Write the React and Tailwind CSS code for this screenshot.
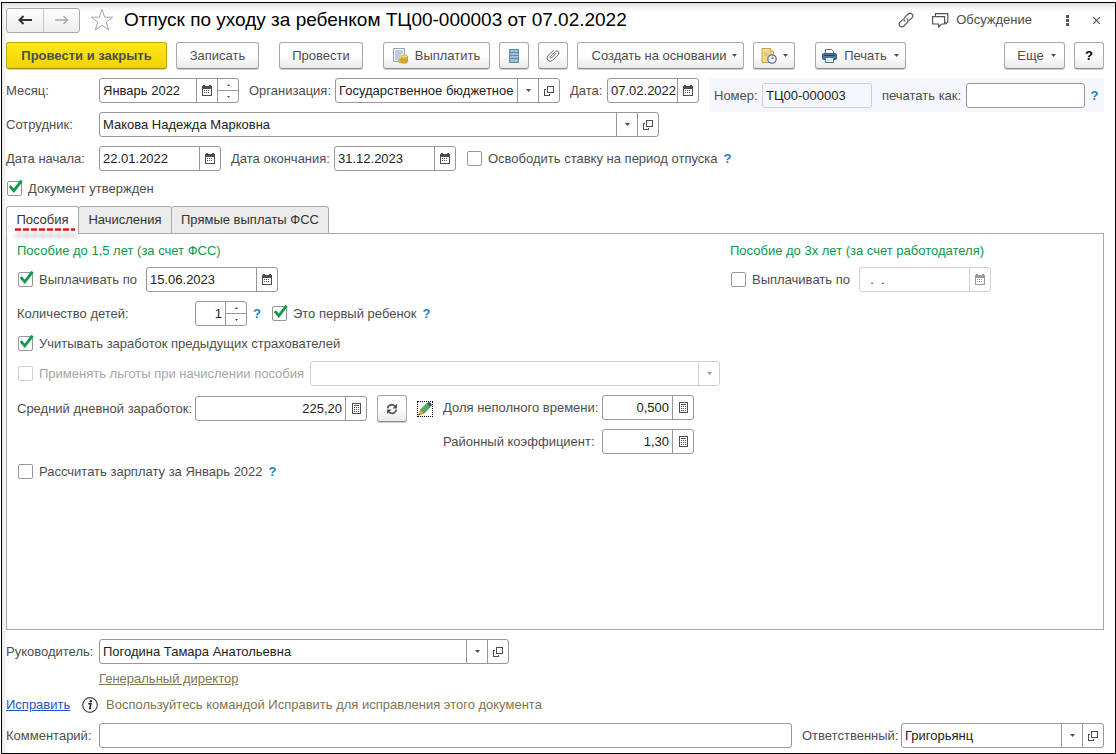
import React, { useState } from 'react';

const BORDER = 'border-[#979797]';
const BORDER_OFF = 'border-[#cfcfcf]';

const CalendarIcon = () => (
  <svg width="10" height="11" viewBox="0 0 10 11" fill="currentColor" shapeRendering="crispEdges">
    <path d="M0 1h1V0h2v1h4V0h2v1h1v10H0zM1 4v6h8V4z" fillRule="evenodd" />
    <path d="M2 5h1v1H2zM4 5h1v1H4zM6 5h1v1H6zM2 7h1v1H2zM4 7h1v1H4zM6 7h1v1H6z" />
  </svg>
);

const CalcIcon = () => (
  <svg width="9" height="11" viewBox="0 0 9 11" fill="currentColor" shapeRendering="crispEdges">
    <path d="M0 0h9v11H0zM1 1v9h7V1z" fillRule="evenodd" />
    <path d="M2 2h5v1H2zM2 4h1v1H2zM4 4h1v1H4zM6 4h1v1H6zM2 6h1v1H2zM4 6h1v1H4zM6 6h1v1H6zM2 8h1v1H2zM4 8h1v1H4zM6 8h1v1H6z" />
  </svg>
);

const OpenIcon = () => (
  <svg width="10" height="10" viewBox="0 0 10 10" fill="none" stroke="currentColor" shapeRendering="crispEdges">
    <path d="M3.5 0.5h6v6h-6z" />
    <path d="M2 3.5H0.5v6h5V8" />
  </svg>
);

const Arrow = () => (
  <svg width="5" height="3" viewBox="0 0 5 3" fill="currentColor">
    <path d="M0 0h5L2.5 3z" />
  </svg>
);

const StarIcon = () => (
  <svg width="24" height="24" viewBox="0 0 24 24" fill="none" stroke="#9da5ad">
    <path d="M12 1.5l2.7 7.7h8l-6.4 4.9 2.4 7.9-6.7-4.8L5.3 22l2.4-7.9-6.4-4.9h8z" />
  </svg>
);

const LinkIcon = () => (
  <svg width="16" height="16" viewBox="0 0 16 16" fill="none" stroke="#555" strokeWidth="1.2" strokeLinecap="round">
    <path d="M6.8 9.2a2.7 2.7 0 0 1 0-3.8l3.6-3.6a2.7 2.7 0 0 1 3.8 3.8l-2.6 2.6" />
    <path d="M9.2 6.8a2.7 2.7 0 0 1 0 3.8l-3.6 3.6a2.7 2.7 0 0 1-3.8-3.8l2.6-2.6" />
  </svg>
);

const ChatIcon = () => (
  <svg width="17" height="15" viewBox="0 0 17 15" fill="none" stroke="#555" strokeWidth="1.2">
    <path d="M0.6 3.6h12v7.4H9.8L6.6 14v-3h-6z" />
    <path d="M3.4 3.4V0.6h12.4v8.2l-1.4 1.8-1.6-1.4" />
  </svg>
);

const PayIcon = () => (
  <svg width="16" height="16" viewBox="0 0 16 16">
    <path d="M0.5 0.5h11v13h-11z" fill="#fff" stroke="#8ea3b5" />
    <path d="M2 3h8M2 5h8M2 7h6M2 9h5M2 11h5" stroke="#7c9bb5" />
    <ellipse cx="8.5" cy="13" rx="3" ry="1.8" fill="#f5c944" stroke="#b98a1c" strokeWidth=".7" />
    <path d="M8 8.5v5a3.3 1.8 0 0 0 6.6 0v-5z" fill="#eebb35" stroke="#b98a1c" strokeWidth=".7" />
    <path d="M8 10.3a3.3 1.6 0 0 0 6.6 0M8 12.1a3.3 1.6 0 0 0 6.6 0" fill="none" stroke="#b98a1c" strokeWidth=".7" />
    <ellipse cx="11.3" cy="8.5" rx="3.3" ry="1.6" fill="#fbe07c" stroke="#b98a1c" strokeWidth=".7" />
  </svg>
);

const ListIcon = () => (
  <svg width="10" height="14" viewBox="0 0 10 14" shapeRendering="crispEdges">
    <path d="M0 0h10v14H0z" fill="#5f8cab" />
    <path d="M1 1h8v2H1zM1 4h8v2H1zM1 7h8v2H1zM1 10h8v3H1z" fill="#9dc0d8" />
  </svg>
);

const ClipIcon = () => (
  <svg width="14" height="14" viewBox="0 0 14 14" fill="none" stroke="#666" strokeWidth="1" strokeLinecap="round">
    <path d="M10 4.4L5.6 8.8a.9.9 0 0 1-1.3-1.3l5-5a2.1 2.1 0 0 1 3 3L6.6 11.2a3.2 3.2 0 0 1-4.6-4.5L7.4 1.4" />
  </svg>
);

const DocClockIcon = () => (
  <svg width="16" height="16" viewBox="0 0 16 16">
    <path d="M1 0.5h8.5l3 3V14.5H1z" fill="#f3d98b" stroke="#c9a446" />
    <path d="M9.5 0.5v3h3" fill="#fff3cc" stroke="#c9a446" />
    <path d="M3 5h5M3 7h4" stroke="#d9ba62" />
    <circle cx="11" cy="11" r="4.2" fill="#fff" stroke="#3f75a8" strokeWidth="1.3" />
    <path d="M11 8.5V11l2-1" fill="none" stroke="#d8402c" />
  </svg>
);

const PrinterIcon = () => (
  <svg width="15" height="14" viewBox="0 0 15 14">
    <path d="M3.5 0.5h6l2 2V5h-8z" fill="#fff" stroke="#4c6f8c" />
    <rect x="0.5" y="4.5" width="14" height="6" rx="1.2" fill="#4a7ba6" stroke="#33587a" />
    <path d="M2 6.5h11" stroke="#24425e" />
    <path d="M3.5 8.5h8v5h-8z" fill="#fff" stroke="#4c6f8c" />
    <path d="M5 11h5" stroke="#a9bccb" />
  </svg>
);

const RefreshIcon = () => (
  <svg width="12" height="12" viewBox="0 0 12 12" fill="none" stroke="#505050" strokeWidth="1.7">
    <path d="M1.5 5.3A4.4 4.4 0 0 1 9 3" />
    <path d="M10.5 6.7A4.4 4.4 0 0 1 3 9" />
    <path d="M11 0.8v4.6H6.4zM1 11.2V6.6h4.6z" fill="#505050" stroke="none" />
  </svg>
);

const PencilIcon = () => (
  <svg width="14" height="14" viewBox="0 0 14 14">
    <path d="M2.4 8L9 1.4l3.4 3.4L5.8 11.4z" fill="#4fae55" stroke="#2f7d3a" strokeWidth=".7" />
    <path d="M9 1.4l1.2-1.2h1.6L13.6 2v1.6l-1.2 1.2z" fill="#2f4f6b" />
    <path d="M2.4 8L0.6 13.2l5.2-1.8z" fill="#f0b040" stroke="#b97f26" strokeWidth=".5" />
    <path d="M0.5 13.5l.7-2 1.3 1.3z" fill="#444" />
  </svg>
);

const InfoIcon = () => (
  <svg width="16" height="16" viewBox="0 0 16 16">
    <circle cx="8" cy="8" r="7.3" fill="#fff" stroke="#444" strokeWidth="1.2" />
    <circle cx="8.8" cy="4.3" r="1.2" fill="#222" />
    <path d="M6.2 6.8h2.6L7.8 11.6h1.4" fill="none" stroke="#222" strokeWidth="1.5" />
  </svg>
);

const plainBtn = 'border-[#a8a8a8] border-b-[#8c8c8c] bg-linear-to-b from-white from-50% to-[#e9e9e9]';
const mainBtn = 'border-[#c2a700] border-b-[#a89000] bg-linear-to-b from-[#ffe81a] to-[#f2d200] font-bold';

function Btn({ className = '', main, children, ...rest }) {
  return (
    <button
      type="button"
      className={`flex h-[27px] shrink-0 items-center justify-center rounded-[3px] border whitespace-nowrap shadow-[0_1px_0_#d0d0d0] ${main ? mainBtn : plainBtn} ${className}`}
      {...rest}
    >
      {children}
    </button>
  );
}

function Field({ className = '', off, children }) {
  return (
    <div className={`flex h-[25px] shrink-0 overflow-hidden rounded-[3px] border bg-white ${off ? `${BORDER_OFF} text-[#999]` : `${BORDER} text-[#4d4d4d]`} ${className}`}>
      {children}
    </div>
  );
}

function TextBox({ right, ...rest }) {
  return <input type="text" className={`w-0 min-w-0 flex-1 bg-transparent text-[#222] outline-none ${right ? 'pr-[3px] text-right' : 'pl-[3px]'}`} {...rest} />;
}

function CellButton({ off, children, ...rest }) {
  return (
    <button type="button" disabled={off} className={`flex w-[21px] shrink-0 items-center justify-center border-l ${off ? BORDER_OFF : BORDER}`} {...rest}>
      {children}
    </button>
  );
}

function Spinner() {
  return (
    <div className={`flex w-[21px] shrink-0 flex-col border-l ${BORDER}`}>
      <button type="button" aria-label="Больше" className={`flex flex-1 items-center justify-center border-b ${BORDER}`}>
        <svg width="3" height="2" viewBox="0 0 3 2" fill="currentColor"><path d="M0 2h3L1.5 0z" /></svg>
      </button>
      <button type="button" aria-label="Меньше" className="flex flex-1 items-center justify-center">
        <svg width="3" height="2" viewBox="0 0 3 2" fill="currentColor"><path d="M0 0h3L1.5 2z" /></svg>
      </button>
    </div>
  );
}

function DateField({ id, value, className, off, label, children }) {
  return (
    <Field className={className} off={off}>
      <TextBox id={id} defaultValue={value} disabled={off} aria-label={label} />
      <CellButton off={off} aria-label="Выбрать дату"><CalendarIcon /></CellButton>
      {children}
    </Field>
  );
}

function NumberField({ id, value, className }) {
  return (
    <Field className={className}>
      <TextBox id={id} defaultValue={value} right />
      <CellButton aria-label="Калькулятор"><CalcIcon /></CellButton>
    </Field>
  );
}

function Combo({ id, value, className, off, noOpen, label }) {
  return (
    <Field className={className} off={off}>
      <div className="relative flex min-w-0 flex-1">
        <select id={id} disabled={off} aria-label={label} className="w-0 min-w-0 flex-1 appearance-none bg-transparent pr-[21px] pl-[3px] text-[#222] outline-none">
          <option>{value}</option>
        </select>
        <span className={`pointer-events-none absolute inset-y-0 right-0 flex w-[21px] items-center justify-center border-l bg-white ${off ? BORDER_OFF : BORDER}`}>
          <Arrow />
        </span>
      </div>
      {!noOpen && <CellButton aria-label="Открыть"><OpenIcon /></CellButton>}
    </Field>
  );
}

function Check({ label, checked = false, off, className = '' }) {
  const [on, setOn] = useState(checked);
  return (
    <label className={`flex h-[25px] items-center gap-[6px] pl-px whitespace-nowrap ${off ? 'text-[#a6a6a6]' : ''} ${className}`}>
      <span className="relative flex">
        <input
          type="checkbox"
          checked={on}
          disabled={off}
          onChange={(e) => setOn(e.target.checked)}
          className={`size-[15px] appearance-none rounded-[2px] border bg-white ${off ? BORDER_OFF : BORDER}`}
        />
        {on && (
          <svg className="pointer-events-none absolute -top-[3px] left-0" width="17" height="17" viewBox="0 0 17 17" fill="none" stroke="#0a9a4b" strokeWidth="2.8">
            <path d="M2.8 8.2l4 4.6L14.6 2.6" />
          </svg>
        )}
      </span>
      {label}
    </label>
  );
}

const Help = () => (
  <button type="button" aria-label="Справка" className="shrink-0 font-bold text-[#1a7fc1]">?</button>
);

const tabs = [
  { id: 'benefits', title: 'Пособия', width: 'w-[73px]' },
  { id: 'accruals', title: 'Начисления', width: 'w-[94px]' },
  { id: 'direct', title: 'Прямые выплаты ФСС', width: 'w-[158px]' },
];

export default function App() {
  const [tab, setTab] = useState('benefits');

  return (
    <div className="flex min-h-screen flex-col bg-white pt-[2px] pl-px font-['Liberation_Sans',Arial,sans-serif] text-[13px] leading-4 text-[#4d4d4d]">
      <div className="flex flex-1 flex-col border border-black pr-[11px] pb-[5px] pl-1 shadow-[inset_4px_6px_6px_-3px_#d9d9d9]">
        <header className="flex h-[34px] items-center">
          <div className="flex h-[25px] rounded-[3px] border border-[#a8a8a8] bg-linear-to-b from-white to-[#ececec]">
            <button type="button" aria-label="Назад" className="flex w-9 items-center justify-center">
              <svg width="14" height="10" viewBox="0 0 14 10" fill="none" stroke="#333" strokeWidth="2"><path d="M14 5H2M5.5 1L1.5 5l4 4" /></svg>
            </button>
            <button type="button" aria-label="Вперед" className="flex w-9 items-center justify-center border-l border-[#c8c8c8]">
              <svg width="14" height="10" viewBox="0 0 14 10" fill="none" stroke="#aaa" strokeWidth="1.6"><path d="M0 5h12M8.5 1l4 4-4 4" /></svg>
            </button>
          </div>
          <button type="button" aria-label="В избранное" className="ml-[10px]"><StarIcon /></button>
          <h1 className="ml-[10px] text-[19px] leading-6 whitespace-nowrap text-black">Отпуск по уходу за ребенком ТЦ00-000003 от 07.02.2022</h1>
          <div className="ml-auto flex items-center">
            <button type="button" aria-label="Получить ссылку"><LinkIcon /></button>
            <button type="button" className="ml-[18px] flex items-center gap-[7px]"><ChatIcon />Обсуждение</button>
            <button type="button" aria-label="Меню" className="ml-[34px]">
              <svg width="3" height="11" viewBox="0 0 3 11" fill="#555"><path d="M0 0h3v3H0zM0 4h3v3H0zM0 8h3v3H0z" /></svg>
            </button>
            <button type="button" aria-label="Закрыть" className="mr-1 ml-6">
              <svg width="7" height="7" viewBox="0 0 7 7" stroke="#555" strokeWidth="1.2"><path d="M0 0l7 7M7 0L0 7" /></svg>
            </button>
          </div>
        </header>

        <div className="mt-[5px] flex gap-5">
          <div className="flex gap-[9px]">
            <Btn main className="w-[161px]">Провести и закрыть</Btn>
            <Btn className="w-[83px]">Записать</Btn>
          </div>
          <Btn className="w-[84px]">Провести</Btn>
          <div className="flex gap-[9px]">
            <Btn className="w-[107px] gap-[6px]"><PayIcon />Выплатить</Btn>
            <Btn className="w-[30px]" aria-label="Список"><ListIcon /></Btn>
            <Btn className="w-[30px]" aria-label="Файлы"><ClipIcon /></Btn>
            <Btn className="w-[167px] gap-[6px] pl-2">Создать на основании<Arrow /></Btn>
            <Btn className="w-[42px] gap-[6px]" aria-label="Отчеты"><DocClockIcon /><Arrow /></Btn>
          </div>
          <Btn className="w-[91px] gap-[7px]"><PrinterIcon />Печать<Arrow /></Btn>
          <div className="ml-auto flex gap-[9px]">
            <Btn className="w-[61px] gap-[7px] pl-1">Еще<Arrow /></Btn>
            <Btn className="w-[30px] text-black" aria-label="Справка"><b>?</b></Btn>
          </div>
        </div>

        <div className="mt-[9px] flex gap-[10px]">
          <div className="flex h-[25px] min-w-0 flex-1 items-center">
            <label htmlFor="month" className="w-[93px] shrink-0">Месяц:</label>
            <DateField id="month" value="Январь 2022" className="w-[140px]"><Spinner /></DateField>
            <label htmlFor="org" className="mx-[10px] w-[76px] shrink-0">Организация:</label>
            <Combo id="org" value="Государственное бюджетное" className="min-w-0 flex-1" />
            <label htmlFor="date" className="ml-[10px] w-[37px] shrink-0">Дата:</label>
            <DateField id="date" value="07.02.2022" className="w-[92px]" />
          </div>
          <div className="flex h-[34px] items-center bg-[#f6f7fd] pt-px pl-[5px]">
            <label htmlFor="num" className="w-12">Номер:</label>
            <input id="num" readOnly defaultValue="ТЦ00-000003" className="h-[25px] w-[110px] rounded-[3px] border border-[#cfcfcf] bg-transparent px-[3px] text-[#222]" />
            <label htmlFor="printAs" className="ml-[10px] w-[84px] whitespace-nowrap">печатать как:</label>
            <input id="printAs" type="text" className={`h-[25px] w-[119px] rounded-[3px] border bg-white px-[3px] ${BORDER}`} />
            <div className="flex w-[19px] justify-center"><Help /></div>
          </div>
        </div>

        <div className="flex items-center">
          <label htmlFor="employee" className="w-[93px]">Сотрудник:</label>
          <Combo id="employee" value="Макова Надежда Марковна" className="w-[560px]" />
        </div>

        <div className="mt-[9px] flex items-center">
          <label htmlFor="from" className="w-[93px]">Дата начала:</label>
          <DateField id="from" value="22.01.2022" className="w-[122px]" />
          <label htmlFor="to" className="ml-[10px] w-[103px] whitespace-nowrap">Дата окончания:</label>
          <DateField id="to" value="31.12.2023" className="mr-[10px] w-[122px]" />
          <Check label="Освободить ставку на период отпуска" />
          <div className="ml-[6px] flex"><Help /></div>
        </div>

        <div className="mt-[5px] flex"><Check label="Документ утвержден" checked /></div>

        <div role="tablist" className="relative z-10 mt-[5px] flex">
          {tabs.map((t) => (
            <button
              key={t.id}
              type="button"
              role="tab"
              aria-selected={tab === t.id}
              onClick={() => setTab(t.id)}
              className={`relative -mr-px -mb-px h-7 rounded-t-[3px] border border-[#a9a9a9] whitespace-nowrap text-[#333] ${t.width} ${tab === t.id ? 'border-b-white bg-white' : 'bg-[#ebebeb]'}`}
            >
              {t.title}
              {tab === t.id && (
                <svg className="absolute top-[21px] left-2 drop-shadow-[1px_6px_2px_#00000055]" width="60" height="3" viewBox="0 0 60 3">
                  <path d="M0 1.5h60" stroke="#f01010" strokeWidth="2.4" strokeDasharray="6 2" />
                </svg>
              )}
            </button>
          ))}
        </div>

        <main className="grid flex-1 grid-cols-[713px_1fr] content-start border border-[#a9a9a9] px-[10px] pt-1">
          <section>
            <h2 className="flex h-[25px] items-center text-[#0a9a4b]">Пособие до 1,5 лет (за счет ФСС)</h2>
            <div className="mt-1 flex">
              <Check label="Выплачивать по" checked className="w-[129px]" />
              <DateField value="15.06.2023" label="Выплачивать по" className="w-[132px]" />
            </div>
            <div className="mt-[9px] flex items-center">
              <label htmlFor="kids" className="w-[178px]">Количество детей:</label>
              <Field className="w-[52px]">
                <TextBox id="kids" defaultValue="1" right />
                <Spinner />
              </Field>
              <div className="mr-[10px] ml-[6px] flex"><Help /></div>
              <Check label="Это первый ребенок" checked />
              <div className="ml-[6px] flex"><Help /></div>
            </div>
            <div className="mt-[5px] flex"><Check label="Учитывать заработок предыдущих страхователей" checked /></div>
            <div className="mt-[5px] flex">
              <Check label="Применять льготы при начислении пособия" off className="w-[293px]" />
              <Combo off noOpen value="" label="Льготы" className="w-[410px]" />
            </div>
            <div className="mt-[9px] flex items-start">
              <div className="flex items-center">
                <label htmlFor="avg" className="w-[178px]">Средний дневной заработок:</label>
                <NumberField id="avg" value="225,20" className="mr-[10px] w-[172px]" />
                <Btn className="w-[30px]" aria-label="Обновить"><RefreshIcon /></Btn>
                <button type="button" aria-label="Изменить" className="mx-[10px] border border-dotted border-black"><PencilIcon /></button>
              </div>
              <div className="grid grid-cols-[159px_92px] items-center gap-y-[9px]">
                <label htmlFor="part">Доля неполного времени:</label>
                <NumberField id="part" value="0,500" />
                <label htmlFor="coef">Районный коэффициент:</label>
                <NumberField id="coef" value="1,30" />
              </div>
            </div>
            <div className="mt-[5px] flex items-center gap-[6px]">
              <Check label="Рассчитать зарплату за Январь 2022" />
              <Help />
            </div>
          </section>

          <section>
            <h2 className="flex h-[25px] items-center text-[#0a9a4b]">Пособие до 3х лет (за счет работодателя)</h2>
            <div className="mt-1 flex">
              <Check label="Выплачивать по" className="w-[129px]" />
              <DateField off value="  .  ." label="Выплачивать по" className="w-[132px]" />
            </div>
          </section>
        </main>

        <footer className="mt-[9px] flex flex-col">
          <div className="flex items-center">
            <label htmlFor="boss" className="w-[93px]">Руководитель:</label>
            <Combo id="boss" value="Погодина Тамара Анатольевна" className="w-[410px]" />
          </div>
          <div className="mt-[7px] flex pl-[93px]">
            <a href="#position" className="text-[#7d7550] underline">Генеральный директор</a>
          </div>
          <div className="mt-[9px] flex h-[18px] items-center">
            <a href="#fix" className="w-[76px] text-[#1f54c4] underline">Исправить</a>
            <InfoIcon />
            <span className="ml-2 text-[#7d7550]">Воспользуйтесь командой Исправить для исправления этого документа</span>
          </div>
          <div className="mt-[9px] flex items-center">
            <label htmlFor="comment" className="w-[93px]">Комментарий:</label>
            <input id="comment" type="text" className={`h-[25px] min-w-0 flex-1 rounded-[3px] border bg-white px-[3px] ${BORDER}`} />
            <label htmlFor="resp" className="ml-[10px] w-[99px]">Ответственный:</label>
            <Combo id="resp" value="Григорьянц" className="w-[203px]" />
          </div>
        </footer>
      </div>
    </div>
  );
}
